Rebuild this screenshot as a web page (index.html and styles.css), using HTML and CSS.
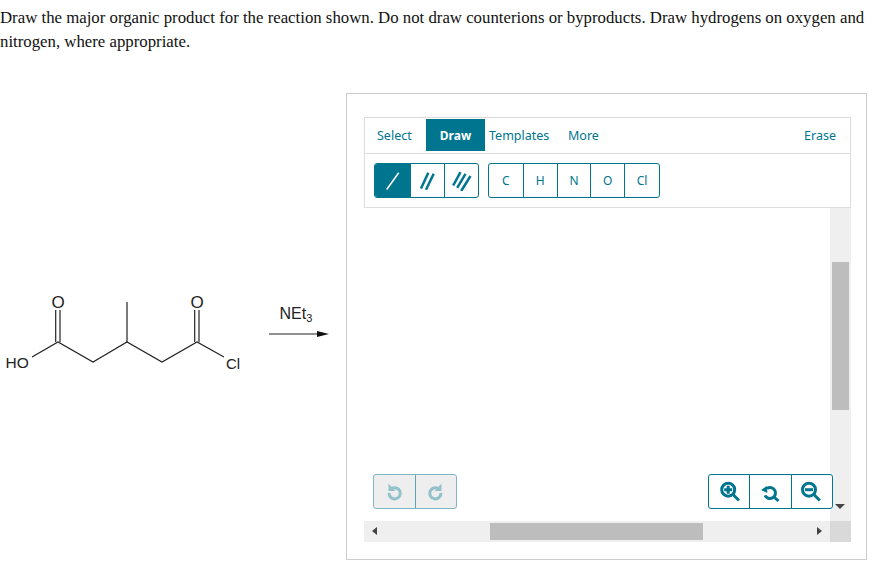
FILE: index.html
```html
<!DOCTYPE html>
<html lang="en">
<head>
<meta charset="utf-8">
<title>Draw the major organic product</title>
<link rel="stylesheet" href="styles.css">
</head>
<body>
<p class="question">Draw the major organic product for the reaction shown. Do not draw counterions or byproducts. Draw hydrogens on oxygen and nitrogen, where appropriate.</p>
<div class="reaction">
  <svg class="scheme" width="346" height="467" viewBox="0 93 346 467">
    <g class="bonds">
      <polyline points="32,357 58,342 93,362 127,342 162,362 197,342 224,357"/>
      <line x1="127" y1="342" x2="127" y2="302"/>
      <line x1="55.7" y1="342" x2="55.7" y2="310"/>
      <line x1="60" y1="342" x2="60" y2="310"/>
      <line x1="194.7" y1="342" x2="194.7" y2="310"/>
      <line x1="199" y1="342" x2="199" y2="310"/>
      <line x1="269" y1="334" x2="318" y2="334"/>
    </g>
    <polygon class="head" points="317,331 329,334 317,337"/>
    <g class="atoms">
      <text class="hydroxyl" x="5.500" y="368">HO</text>
      <text class="oxygen" x="51.500" y="308">O</text>
      <text class="oxygen" x="190.500" y="308">O</text>
      <text x="226" y="368.500">Cl</text>
      <text class="reagent" x="279.500" y="318.500">NEt<tspan class="sub" dy="3">3</tspan></text>
    </g>
  </svg>
  <section class="panel">
    <div class="toolbar">
      <nav class="tabs">
        <a class="tab tab-select">Select</a>
        <a class="tab tab-draw">Draw</a>
        <a class="tab tab-templates">Templates</a>
        <a class="tab tab-more">More</a>
        <a class="tab tab-erase">Erase</a>
      </nav>
      <div class="tools">
        <div class="group bonds-group">
          <button class="cell bond active"><svg width="16" height="20" viewBox="0 0 16 20"><line x1="1.700" y1="18.500" x2="13.700" y2="1.800"/></svg></button>
          <button class="cell bond"><svg width="18" height="20" viewBox="0 0 18 20"><line x1="2" y1="17.500" x2="9.300" y2="1.800"/><line x1="7" y1="18.800" x2="14.700" y2="2.800"/></svg></button>
          <button class="cell bond"><svg width="20" height="20" viewBox="0 0 20 20"><line x1="1.200" y1="14.500" x2="8.500" y2="1.200"/><line x1="5.200" y1="16.800" x2="13.500" y2="2.800"/><line x1="9.200" y1="20" x2="18.500" y2="5"/></svg></button>
        </div>
        <div class="group atoms-group">
          <button class="cell atom">C</button>
          <button class="cell atom">H</button>
          <button class="cell atom">N</button>
          <button class="cell atom">O</button>
          <button class="cell atom">Cl</button>
        </div>
      </div>
    </div>
    <div class="canvas">
      <div class="drawing"></div>
      <div class="vscroll"><div class="vthumb"></div><span class="arrow down"></span></div>
      <div class="hscroll"><span class="arrow left"></span><div class="hthumb"></div><span class="arrow right"></span></div>
      <div class="corner"></div>
      <div class="group history">
        <button class="cell icon"><svg width="18" height="18" viewBox="0 0 18 18"><path class="ring" d="M6.500 5.700A5.600 5.600 0 1 1 4.100 9.800"/><polygon class="tip" points="3.500,0.500 3.500,8 10.500,8"/></svg></button>
        <button class="cell icon"><svg width="18" height="18" viewBox="0 0 18 18"><path class="ring" d="M11.500 5.700A5.600 5.600 0 1 0 13.900 9.800"/><polygon class="tip" points="14.500,0.500 14.500,8 7.500,8"/></svg></button>
      </div>
      <div class="group zoom">
        <button class="cell icon"><svg width="22" height="22" viewBox="0 0 22 22"><circle class="ring" cx="10.200" cy="8.700" r="6.500"/><line class="ring" x1="15" y1="13.500" x2="21" y2="19.500"/><path class="mark" d="M6.200 8.700h8M10.200 4.700v8"/></svg></button>
        <button class="cell icon"><svg width="22" height="22" viewBox="0 0 22 22"><path class="ring" d="M8 7.400A5.500 5.500 0 1 1 6 14.300"/><line class="ring" x1="15" y1="16" x2="19.500" y2="20"/><polygon class="tip" points="2,9 8,5 8.300,12"/></svg></button>
        <button class="cell icon"><svg width="22" height="22" viewBox="0 0 22 22"><circle class="ring" cx="8" cy="8.700" r="6.500"/><line class="ring" x1="12.800" y1="13.500" x2="18.800" y2="19.500"/><path class="mark" d="M4 8.700h8"/></svg></button>
      </div>
    </div>
  </section>
</div>
</body>
</html>
```
FILE: styles.css
```css
html, body { margin: 0; padding: 0; background: #fff; }
body { width: 878px; height: 581px; overflow: hidden; }

.question {
  margin: 0;
  padding: 6px 0 0 0;
  width: 870px;
  font: 16.800px/24px "Liberation Serif", serif;
  color: #111;
}

.reaction { display: flex; margin-top: 39px; }
.scheme { flex: none; display: block; }
.bonds line, .bonds polyline { fill: none; stroke: #222; stroke-width: 1.200; }
.head { fill: #111; }
.atoms text { font: 15px "Liberation Sans", sans-serif; fill: #222; }
.atoms .hydroxyl { font-size: 15.500px; }
.atoms .oxygen { font-size: 17px; }
.atoms .reagent { font-size: 16px; }
.atoms .sub { font-size: 11px; }

.panel {
  box-sizing: border-box;
  width: 521px;
  height: 467px;
  padding: 23px 15px 17px 17px;
  border: 1px solid #ccc;
  display: flex;
  flex-direction: column;
}

.toolbar { box-sizing: border-box; height: 91px; border: 1px solid #ddd; flex: none; }

.tabs {
  height: 35px;
  border-bottom: 1px solid #ddd;
  display: flex;
  align-items: flex-start;
  font: 12.500px "Noto Sans", sans-serif;
  color: #00758f;
}
.tab { margin-top: 1px; line-height: 33px; display: block; white-space: nowrap; }
.tab-select { margin-left: 12px; width: 49px; }
.tab-draw {
  width: 59px;
  height: 32px;
  background: #00758f;
  color: #fff;
  font-size: 12px;
  font-weight: 700;
  text-align: center;
}
.tab-templates { margin-left: 4px; width: 79px; }
.tab-erase { margin-left: auto; margin-right: 14px; }

.tools { display: flex; gap: 9px; padding: 9px 0 0 9px; }

.group {
  display: flex;
  box-sizing: border-box;
  height: 35px;
  border: 1px solid #00758f;
  border-radius: 3px;
  background: #fff;
}
.cell {
  margin: 0;
  padding: 0;
  background: none;
  border: 0;
  border-left: 1px solid #00758f;
  display: flex;
  align-items: center;
  justify-content: center;
  color: #00758f;
  font: 12px "Noto Sans", sans-serif;
}
.cell:first-child { border-left: 0; }

.bonds-group { width: 105px; }
.bond { width: 34px; }
.bond:first-child { width: 35px; }
.bond line { stroke: #00758f; stroke-width: 2.500; }
.bond.active { background: #00758f; border-radius: 2px 0 0 2px; }
.bond.active line { stroke: #fff; stroke-width: 1.500; }

.atoms-group { width: 172px; }
.atom { width: 34px; }
.atom:last-child { width: 35px; }

.canvas {
  position: relative;
  flex: 1;
  display: grid;
  grid-template-columns: 1fr 21px;
  grid-template-rows: 1fr 21px;
}
.drawing { background: #fff; }
.vscroll { background: #efefef; position: relative; }
.hscroll { background: #efefef; position: relative; }
.corner { background: #d9d9d9; }
.vthumb { position: absolute; left: 2px; right: 2px; top: 54px; height: 148px; background: #bdbdbd; }
.hthumb { position: absolute; top: 2px; bottom: 2px; left: 126px; width: 213px; background: #bdbdbd; }

.arrow { position: absolute; width: 0; height: 0; border-style: solid; border-color: transparent; }
.down { left: 5px; bottom: 12px; border-width: 5px 5px 0 5px; border-top-color: #444; }
.left { left: 8px; top: 6px; border-width: 4.500px 5px 4.500px 0; border-right-color: #444; }
.right { right: 8px; top: 6px; border-width: 4.500px 0 4.500px 5px; border-left-color: #444; }

.history, .zoom { position: absolute; top: 266px; }
.history { left: 9px; width: 84px; background: #eee; border-color: #7fb8c5; }
.history .cell { flex: 1; border-left-color: #5ba6b5; }
.history .icon .ring { stroke: #93c1cc; }
.history .icon .tip { fill: #93c1cc; }
.zoom { left: 344px; width: 125px; }
.zoom .cell { flex: 1; }

.icon .ring { fill: none; stroke: #00758f; stroke-width: 3; }
.icon .mark { fill: none; stroke: #00758f; stroke-width: 3; }
.icon .tip { fill: #00758f; }
```
